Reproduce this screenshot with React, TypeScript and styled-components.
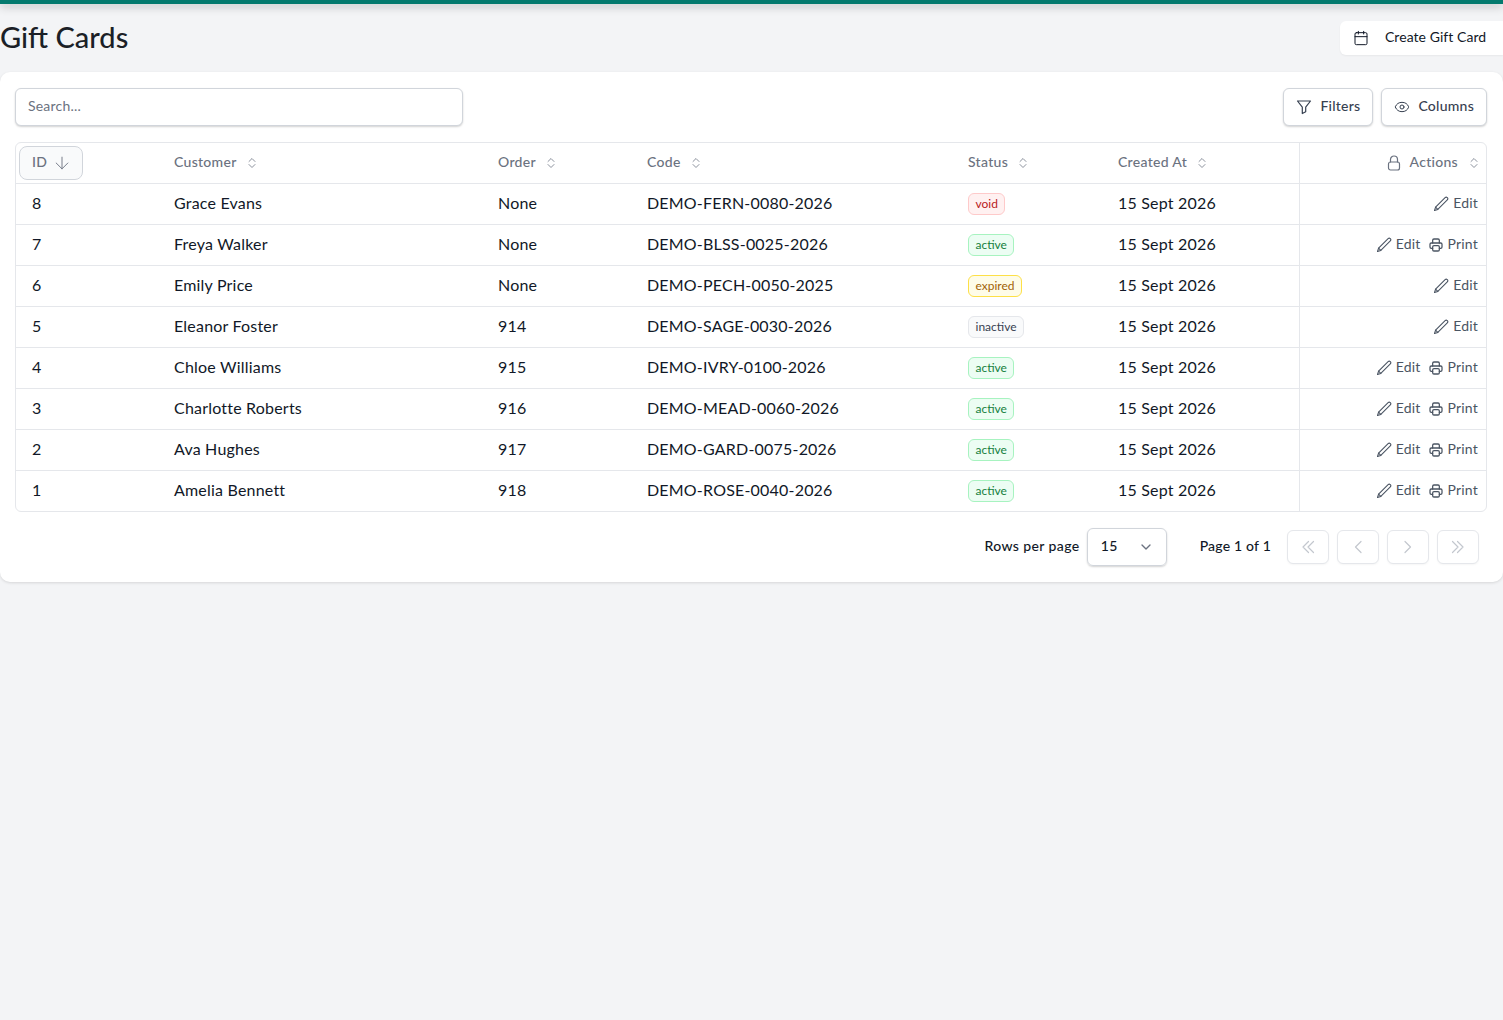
import React from "react";
import styled, { createGlobalStyle } from "styled-components";
import { Calendar, ChevronDown, ArrowDown, Eye } from "lucide-react";

const Global = createGlobalStyle`
  html, body { margin: 0; padding: 0; background: #f3f4f6; }
  body { font-family: "Lato", "Open Sans", sans-serif; color: #111827; min-height: 1020px; }
  * { box-sizing: border-box; }
`;

const TopBar = styled.div`
  height: 4px;
  background: #047a6e;
  box-shadow: 0 2px 10px rgba(0, 0, 0, 0.3);
`;
const Header = styled.header`
  display: flex;
  justify-content: space-between;
  align-items: flex-start;
  height: 68px;
  padding-top: 17px;
`;
const Title = styled.h1`
  margin: -1px 0 0;
  font-size: 29px;
  line-height: 33px;
  font-weight: 500;
  color: #1b1f27;
`;
const Label = styled.span`
  display: block;
  margin-bottom: 3px;
`;
const CreateButton = styled.button`
  display: flex;
  align-items: center;
  gap: 16px;
  width: 163px;
  height: 34px;
  padding: 0 0 0 13px;
  background: #fff;
  border: 0;
  border-radius: 6px 0 0 6px;
  box-shadow: 0 1px 2px rgba(0, 0, 0, 0.05);
  font: 400 14px "Lato", sans-serif;
  letter-spacing: 0.05px;
  color: #111827;
`;
const Card = styled.main`
  background: #fff;
  border-radius: 10px;
  height: 510px;
  padding: 16px 16px 0 15px;
  box-shadow: 0 1px 3px rgba(0, 0, 0, 0.12);
`;
const Toolbar = styled.div`
  display: flex;
  justify-content: space-between;
  height: 38px;
  margin-bottom: 16px;
`;
const Search = styled.input`
  width: 448px;
  height: 38px;
  padding: 0 12px 3px;
  border: 1px solid #d1d5db;
  border-radius: 6px;
  box-shadow: 0 1px 2px rgba(0, 0, 0, 0.18);
  font: 14px "Lato", sans-serif;
  letter-spacing: 0.2px;
  outline: none;
  &::placeholder { color: #6b7280; opacity: 1; }
`;
const ToolGroup = styled.div`
  display: flex;
  gap: 8px;
`;
const ToolButton = styled.button`
  display: flex;
  align-items: center;
  gap: 8px;
  height: 38px;
  padding: 0 12px;
  background: #fff;
  border: 1px solid #d1d5db;
  border-radius: 6px;
  box-shadow: 0 1px 2px rgba(0, 0, 0, 0.18);
  font: 500 14px "Lato", sans-serif;
  letter-spacing: 0.25px;
  color: #374151;
`;
const TableFrame = styled.div`
  border: 1px solid #e5e7eb;
  border-radius: 6px;
  overflow: hidden;
`;
const Table = styled.table`
  width: 1471px;
  table-layout: fixed;
  border-collapse: separate;
  border-spacing: 0;
`;
const Th = styled.th<{ $sticky?: boolean }>`
  height: 41px;
  padding: 0 ${(p) => (p.$sticky ? "9px" : "8px")} 0 16px;
  border-bottom: 1px solid #e5e7eb;
  border-left: ${(p) => (p.$sticky ? "1px solid #e5e7eb" : "0")};
  font-size: 14px;
  font-weight: 500;
  letter-spacing: 0.3px;
  color: #6b7280;
  text-align: left;
`;
const HeadInner = styled.span<{ $end?: boolean }>`
  display: flex;
  align-items: center;
  justify-content: ${(p) => (p.$end ? "flex-end" : "flex-start")};
  gap: ${(p) => (p.$end ? "8px" : "11px")};
  ${(p) => (p.$end ? "svg:last-child { margin-left: 4px; }" : "")}
`;
const SortedHead = styled.span`
  display: flex;
  align-items: center;
  gap: 5px;
  width: 64px;
  height: 34px;
  margin-left: -13px;
  padding-left: 12px;
  background: #f9fafb;
  border: 1px solid #d1d5db;
  border-radius: 8px;
`;
const Td = styled.td<{ $sticky?: boolean; $flush?: boolean }>`
  height: 41px;
  padding: 0 ${(p) => (p.$sticky ? "9px" : "8px")} ${(p) => (p.$flush ? "0" : "4px")} 16px;
  font-size: 16px;
  letter-spacing: 0.2px;
  color: #111827;
  border-left: ${(p) => (p.$sticky ? "1px solid #e5e7eb" : "0")};
  tr:not(:last-child) > & { border-bottom: 1px solid #e5e7eb; }
  tr:last-child > & { height: 40px; }
`;
const tones = {
  void: ["#fff1f1", "#fecaca", "#b91c1c"],
  active: ["#ecfdf3", "#a7f3c0", "#15803d"],
  expired: ["#fefce8", "#fde047", "#a16207"],
  inactive: ["#f9fafb", "#e5e7eb", "#374151"],
} as const;
type Status = keyof typeof tones;
const Badge = styled.span<{ $status: Status }>`
  display: inline-block;
  height: 22px;
  padding: 0 6.5px;
  line-height: 19px;
  font-size: 12px;
  font-weight: 400;
  letter-spacing: 0;
  border-radius: 6px;
  vertical-align: middle;
  background: ${(p) => tones[p.$status][0]};
  border: 1px solid ${(p) => tones[p.$status][1]};
  color: ${(p) => tones[p.$status][2]};
`;
const Actions = styled.div`
  display: flex;
  justify-content: flex-end;
  gap: 7px;
`;
const ActionLink = styled.span`
  display: flex;
  align-items: center;
  gap: 4px;
  font-size: 14px;
  color: #4b5563;
`;
const Footer = styled.footer`
  display: flex;
  justify-content: flex-end;
  align-items: center;
  height: 70px;
  padding-right: 8px;
  font-size: 14px;
  font-weight: 500;
  letter-spacing: 0.4px;
  color: #111827;
`;
const RowsLabel = styled(Label)`
  margin-right: 7px;
`;
const PageSelect = styled.div`
  display: flex;
  align-items: center;
  justify-content: space-between;
  width: 80px;
  height: 38px;
  padding: 0 12px 0 13px;
  border: 1px solid #d1d5db;
  border-radius: 6px;
  box-shadow: 0 1px 2px rgba(0, 0, 0, 0.18);
  margin-right: 33px;
`;
const PageLabel = styled(Label)`
  margin-right: 16px;
  letter-spacing: 0.2px;
`;
const PagerGroup = styled.div`
  display: flex;
  gap: 8px;
`;
const PagerButton = styled.button`
  display: flex;
  align-items: center;
  justify-content: center;
  width: 42px;
  height: 34px;
  padding: 0;
  background: #fff;
  border: 1px solid #e5e7eb;
  border-radius: 6px;
  box-shadow: 0 1px 2px rgba(0, 0, 0, 0.04);
  color: #c3c7ce;
`;

type IconProps = { children: React.ReactNode; box?: string; w?: number; h?: number; stroke?: number; color?: string };
const Icon = ({ children, box = "0 0 16 16", w = 16, h = 16, stroke = 1.2, color = "currentColor" }: IconProps) => (
  <svg width={w} height={h} viewBox={box} fill="none" stroke={color} strokeWidth={stroke} strokeLinecap="round" strokeLinejoin="round" style={{ flex: "none" }}>
    {children}
  </svg>
);
const SortIcon = () => (
  <Icon box="0 0 8 12" w={8} h={12} stroke={1} color="#8b919c">
    <path d="M1 4.5 4 1.5 7 4.5M1 7.5 4 10.5 7 7.5" />
  </Icon>
);
const LockIcon = () => (
  <Icon box="0 0 14 16" w={14} h={16}>
    <rect x="1.5" y="7" width="11" height="8" rx="2" />
    <path d="M3.5 7V4.5a3.5 3.5 0 0 1 7 0V7" />
  </Icon>
);
const PencilIcon = () => (
  <Icon stroke={1.1}>
    <path d="M1.5 14.5 2.6 11.2 12.1 1.7a1.5 1.5 0 0 1 2.2 2.2L4.8 13.4Z" />
    <path d="M2.6 11.2 4.8 13.4" />
  </Icon>
);
const PrinterIcon = () => (
  <Icon box="0 0 24 24" stroke={1.9}>
    <path d="M17 17h2a2 2 0 0 0 2-2v-4a2 2 0 0 0-2-2H5a2 2 0 0 0-2 2v4a2 2 0 0 0 2 2h2" />
    <path d="M17 9V5a2 2 0 0 0-2-2H9a2 2 0 0 0-2 2v4" />
    <rect x="7" y="13" width="10" height="8" rx="2" />
  </Icon>
);
const FunnelIcon = () => (
  <Icon>
    <path d="M1.5 2h13L9.7 8.2v4.6L6.3 14.5V8.2Z" />
  </Icon>
);
const pagerPaths = {
  first: "M8.5 2.5 3 8l5.5 5.5M13.5 2.5 8 8l5.5 5.5",
  prev: "M11 2.5 5.5 8l5.5 5.5",
  next: "M5 2.5 10.5 8 5 13.5",
  last: "M2.5 2.5 8 8l-5.5 5.5M7.5 2.5 13 8l-5.5 5.5",
};

const widths = [142, 324, 149, 321, 150, 197, 188];
const rows: { id: number; customer: string; order: string; code: string; status: Status }[] = [
  { id: 8, customer: "Grace Evans", order: "None", code: "DEMO-FERN-0080-2026", status: "void" },
  { id: 7, customer: "Freya Walker", order: "None", code: "DEMO-BLSS-0025-2026", status: "active" },
  { id: 6, customer: "Emily Price", order: "None", code: "DEMO-PECH-0050-2025", status: "expired" },
  { id: 5, customer: "Eleanor Foster", order: "914", code: "DEMO-SAGE-0030-2026", status: "inactive" },
  { id: 4, customer: "Chloe Williams", order: "915", code: "DEMO-IVRY-0100-2026", status: "active" },
  { id: 3, customer: "Charlotte Roberts", order: "916", code: "DEMO-MEAD-0060-2026", status: "active" },
  { id: 2, customer: "Ava Hughes", order: "917", code: "DEMO-GARD-0075-2026", status: "active" },
  { id: 1, customer: "Amelia Bennett", order: "918", code: "DEMO-ROSE-0040-2026", status: "active" },
];
const heads = ["Customer", "Order", "Code", "Status", "Created At"];

export default function App() {
  return (
    <>
      <Global />
      <TopBar />
      <Header>
        <Title>Gift Cards</Title>
        <CreateButton><Calendar size={16} strokeWidth={1.5} /><Label>Create Gift Card</Label></CreateButton>
      </Header>
      <Card>
        <Toolbar>
          <Search placeholder="Search..." />
          <ToolGroup>
            <ToolButton><FunnelIcon /><Label>Filters</Label></ToolButton>
            <ToolButton><Eye size={16} strokeWidth={1.5} /><Label>Columns</Label></ToolButton>
          </ToolGroup>
        </Toolbar>
        <TableFrame>
          <Table>
            <colgroup>
              {widths.map((w, i) => <col key={i} style={{ width: w }} />)}
            </colgroup>
            <thead>
              <tr>
                <Th><SortedHead><Label>ID</Label><ArrowDown size={20} strokeWidth={1.1} /></SortedHead></Th>
                {heads.map((h) => (
                  <Th key={h}><HeadInner><Label>{h}</Label><SortIcon /></HeadInner></Th>
                ))}
                <Th $sticky>
                  <HeadInner $end><LockIcon /><Label>Actions</Label><SortIcon /></HeadInner>
                </Th>
              </tr>
            </thead>
            <tbody>
              {rows.map((r) => (
                <tr key={r.id}>
                  <Td>{r.id}</Td>
                  <Td>{r.customer}</Td>
                  <Td>{r.order}</Td>
                  <Td>{r.code}</Td>
                  <Td $flush><Badge $status={r.status}>{r.status}</Badge></Td>
                  <Td>15 Sept 2026</Td>
                  <Td $sticky $flush>
                    <Actions>
                      <ActionLink><PencilIcon /><Label>Edit</Label></ActionLink>
                      {r.status === "active" && <ActionLink><PrinterIcon /><Label>Print</Label></ActionLink>}
                    </Actions>
                  </Td>
                </tr>
              ))}
            </tbody>
          </Table>
        </TableFrame>
        <Footer>
          <RowsLabel>Rows per page</RowsLabel>
          <PageSelect><Label>15</Label><ChevronDown size={16} color="#6b7280" /></PageSelect>
          <PageLabel>Page 1 of 1</PageLabel>
          <PagerGroup>
            {(Object.keys(pagerPaths) as (keyof typeof pagerPaths)[]).map((k) => (
              <PagerButton key={k} disabled aria-label={k}>
                <Icon><path d={pagerPaths[k]} /></Icon>
              </PagerButton>
            ))}
          </PagerGroup>
        </Footer>
      </Card>
    </>
  );
}
